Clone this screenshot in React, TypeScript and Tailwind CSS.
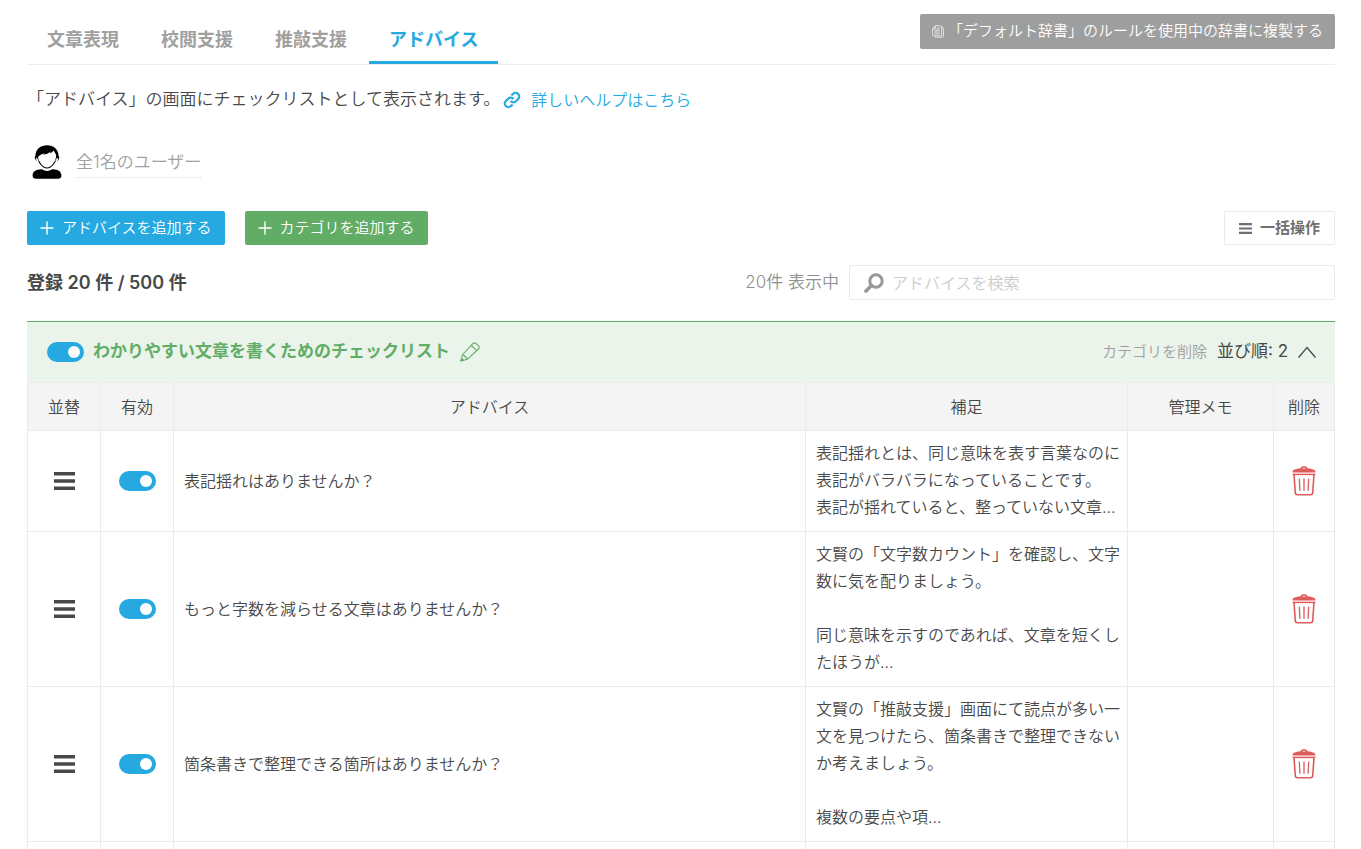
import { useState } from "react";

const tabs = ["文章表現", "校閲支援", "推敲支援", "アドバイス"];

type Advice = {
  id: number;
  title: string;
  note: string;
};

const adviceList: Advice[] = [
  {
    id: 1,
    title: "表記揺れはありませんか？",
    note: "表記揺れとは、同じ意味を表す言葉なのに表記がバラバラになっていることです。\n表記が揺れていると、整っていない文章...",
  },
  {
    id: 2,
    title: "もっと字数を減らせる文章はありませんか？",
    note: "文賢の「文字数カウント」を確認し、文字数に気を配りましょう。\n\n同じ意味を示すのであれば、文章を短くしたほうが...",
  },
  {
    id: 3,
    title: "箇条書きで整理できる箇所はありませんか？",
    note: "文賢の「推敲支援」画面にて読点が多い一文を見つけたら、箇条書きで整理できないか考えましょう。\n\n複数の要点や項...",
  },
];

function Toggle({ label }: { label: string }) {
  const [on, setOn] = useState(true);
  return (
    <input
      type="checkbox"
      aria-label={label}
      checked={on}
      onChange={e => setOn(e.target.checked)}
      className="flex h-5 w-[37px] shrink-0 cursor-pointer appearance-none items-center rounded-full bg-gray-300 px-1 before:h-3 before:w-3 before:rounded-full before:bg-white checked:justify-end checked:bg-[#25a9e0]"
    />
  );
}

function BarsIcon({ className }: { className: string }) {
  return (
    <svg viewBox="0 0 21 20" fill="currentColor" className={className} aria-hidden="true">
      <path d="M0 1h21v3.6H0zM0 8.2h21v3.6H0zM0 15.4h21V19H0z" />
    </svg>
  );
}

function PlusIcon() {
  return (
    <svg viewBox="0 0 14 14" stroke="currentColor" strokeWidth="1.4" className="h-3.5 w-3.5" aria-hidden="true">
      <path d="M7 .5v13M.5 7h13" />
    </svg>
  );
}

function CopyIcon() {
  return (
    <svg viewBox="0 0 12 13" fill="none" stroke="currentColor" strokeWidth="0.7" className="h-[13px] w-3" aria-hidden="true">
      <path d="M3.4.8h5.2a1 1 0 0 1 1 1v8a1 1 0 0 1-1 1h-7a1 1 0 0 1-1-1V3.6z" />
      <path d="M3.4.8v2.8H.6M2.4 5.2h5.2M2.4 7h5.2M2.4 8.8h5.2M4.8 3.3h2.8M9.8 2.4h.6a1 1 0 0 1 1 1v7.8a1 1 0 0 1-1 1H4a1 1 0 0 1-1-1" />
    </svg>
  );
}

function LinkIcon() {
  return (
    <svg viewBox="0 0 24 24" fill="none" stroke="currentColor" strokeWidth="3" className="h-[18px] w-[18px]" aria-hidden="true">
      <path d="M10 13.2a4.8 4.8 0 0 0 7.2.5l3-3a4.8 4.8 0 0 0-6.8-6.8l-2.2 2.2" />
      <path d="M14 10.8a4.8 4.8 0 0 0-7.2-.5l-3 3a4.8 4.8 0 0 0 6.8 6.8l2.2-2.2" />
    </svg>
  );
}

function UserIcon() {
  return (
    <svg viewBox="0 0 30 34" className="h-[34px] w-[30px]" aria-hidden="true">
      <path
        d="M5 10.5C5.5 16.500 10.500 23 15 23S24.500 16.500 25 10.500"
        fill="#fff"
        stroke="#000"
        strokeWidth="1.200"
      />
      <path
        d="M3.200 14.200C2.300 12.500 3 11.600 3.400 10.800 3.800 4 8.500.3 15 .3S26.200 4 26.600 10.800c.4.800 1.100 1.700.2 3.400-.6 1-1.300 1.400-1.900 1.600l-.4-4.300C24 9 23 7.500 21.500 5.400c-.8 1.400-2 2.200-3.600 2.900l.7-1.800c-2 2.200-4.500 2.600-7.200 3.300l1.200-1.500c-2.800.8-5.500 2-6.900 4.200l-.4 3.300c-.8-.3-1.500-.7-2.100-1.600z"
      />
      <path d="M4 13.500c1 .2 1.500 1.700 2 2.800M26 13.500c-1 .2-1.500 1.700-2 2.800" fill="none" stroke="#fff" strokeWidth="1.400" />
      <path d="M9 24.200c2 .2 3.600 1.700 6 1.700s4-1.500 6-1.700c5 .2 8.400 2.300 8.400 6.300 0 2.200-1.400 3.300-3.400 3.300H4c-2 0-3.400-1.100-3.400-3.300 0-4 3.400-6.100 8.400-6.300z" />
    </svg>
  );
}

function SearchIcon() {
  return (
    <svg viewBox="0 0 20 20" fill="none" stroke="currentColor" className="h-5 w-5" aria-hidden="true">
      <circle cx="12" cy="8" r="6.200" strokeWidth="3" />
      <path d="M7.500 12.500L2 18" strokeWidth="3.600" strokeLinecap="round" />
    </svg>
  );
}

function PencilIcon() {
  return (
    <svg viewBox="0 0 20 20" fill="none" stroke="currentColor" strokeWidth="1.100" strokeLinejoin="round" className="h-5 w-5" aria-hidden="true">
      <path d="M1 19l1.300-6L12.800 1.700a2.400 2.400 0 0 1 3.300-.1l2.300 2.100a2.400 2.400 0 0 1 .1 3.300L7.200 17.300z" />
      <path d="M2.500 13c1.300-.3 1.900.4 2 1.700 1.400-.2 2.400.9 2.500 2.600M11.300 3.500l5.200 4.900" />
      <path d="M1 19l.7-2.700 2 2z" fill="currentColor" />
    </svg>
  );
}

function TrashIcon() {
  return (
    <svg viewBox="0 0 24 30" fill="none" stroke="currentColor" className="h-[30px] w-6" aria-hidden="true">
      <path d="M.6 6.400V5.600C.6 4.200 3.500 2.700 8.600 2.200 8.800.8 9.800.2 12 .2s3.200.6 3.400 2c5.100.5 8 2 8 3.400v.8z" fill="currentColor" stroke="none" />
      <path d="M10.600 2.200h2.800" stroke="#fff" strokeWidth="0.800" />
      <path d="M.6 8.400h22.800" strokeWidth="1.500" />
      <path d="M2 8.500l1.300 18.300c.1 1.300.8 1.900 2 1.900h13.400c1.200 0 1.900-.6 2-1.900L22 8.500" strokeWidth="1.600" />
      <path d="M7.300 12.500l.6 12.300M12 12.500v12.300M16.700 12.500l-.6 12.300" strokeWidth="1.300" />
    </svg>
  );
}

export default function App() {
  const [activeTab, setActiveTab] = useState("アドバイス");
  const [query, setQuery] = useState("");
  const [open, setOpen] = useState(true);

  const rows = adviceList.filter(a => a.title.includes(query));

  return (
    <main className="h-screen overflow-hidden bg-white pr-[26px] pl-[27px] font-['Inter','Noto_Sans_CJK_JP',sans-serif] text-[#484848]">
      {/* Tabs */}
      <header className="flex items-end justify-between border-b border-[#eeeeee] pt-3.5">
        <nav className="flex gap-0.5">
          {tabs.map(tab => (
            <button
              key={tab}
              onClick={() => setActiveTab(tab)}
              className={`h-[50px] border-b-3 px-5 pt-1 text-lg font-semibold ${
                tab === activeTab ? "border-[#25a9e0] text-[#25a9e0]" : "border-transparent text-[#a0a0a0]"
              }`}
            >
              {tab}
            </button>
          ))}
        </nav>
        <button className="mb-[15px] flex h-[35px] items-center gap-1 self-start rounded-xs bg-[#9e9e9e] px-3 text-[15px] font-[350] text-white">
          <CopyIcon />
          「デフォルト辞書」のルールを使用中の辞書に複製する
        </button>
      </header>

      <div className="mt-[21px] flex h-7 items-center gap-[3px]">
        <p className="text-[17px] font-[350]">「アドバイス」の画面にチェックリストとして表示されます。</p>
        <a href="#help" className="flex items-center gap-2.5 text-base font-[350] text-[#25a9e0]">
          <LinkIcon />
          詳しいヘルプはこちら
        </a>
      </div>

      <div className="mt-[31px] flex items-center gap-3.5 pl-[5px]">
        <UserIcon />
        <button className="border-b border-dotted border-[#dddddd] text-[17px] leading-[30px] font-[350] text-[#a0a0a0]">
          全1名のユーザー
        </button>
      </div>

      {/* Actions */}
      <div className="mt-8 flex items-center gap-5 text-[15px]">
        <button className="flex h-[34px] items-center gap-2 rounded-xs bg-[#25a9e0] px-[13px] font-[350] text-white">
          <PlusIcon />
          アドバイスを追加する
        </button>
        <button className="flex h-[34px] items-center gap-2 rounded-xs bg-[#62ad66] px-[13px] font-[350] text-white">
          <PlusIcon />
          カテゴリを追加する
        </button>
        <button className="ml-auto flex h-[34px] items-center gap-2 rounded-xs border border-[#eaeaea] px-3.5 font-semibold text-[#707070]">
          <BarsIcon className="h-[13px] w-[13px]" />
          一括操作
        </button>
      </div>

      <div className="mt-5 flex items-center">
        <h1 className="text-lg font-semibold">登録 20 件 / 500 件</h1>
        <span className="mr-2.5 ml-auto text-[17px] font-[350] text-[#909090]">20件 表示中</span>
        <label className="flex h-[35px] w-[486px] items-center gap-2 rounded-xs border border-[#eaeaea] pl-3.5 text-[#989898]">
          <SearchIcon />
          <input
            type="text"
            aria-label="アドバイスを検索"
            placeholder="アドバイスを検索"
            value={query}
            onChange={e => setQuery(e.target.value)}
            className="min-w-0 flex-1 text-base font-[350] text-[#484848] outline-none placeholder:text-[#cccccc]"
          />
        </label>
      </div>

      {/* Category */}
      <section className="mt-[21px]">
        <div className="flex h-[61px] items-center border-t border-[#62ad66] bg-[#eaf4ea] pr-[19px] pl-5">
          <Toggle label="カテゴリを有効にする" />
          <h2 className="ml-[9px] text-[17px] font-semibold text-[#62ad66]">わかりやすい文章を書くためのチェックリスト</h2>
          <button aria-label="カテゴリ名を編集" className="ml-2.5 text-[#62ad66]">
            <PencilIcon />
          </button>
          <button className="mr-2.5 ml-auto text-[15px] font-[350] text-[#a0a0a0]">カテゴリを削除</button>
          <span className="text-[17px]">並び順: 2</span>
          <button aria-label="開閉" onClick={() => setOpen(!open)} className="ml-2.5">
            <svg viewBox="0 0 18 12" fill="none" stroke="currentColor" strokeWidth="1.300" className="h-3 w-[18px]">
              <path d="M.5 11.500L9 1.500l8.500 10" />
            </svg>
          </button>
        </div>

        {open && (
          <table className="w-full table-fixed border-collapse text-base font-[350]">
            <colgroup>
              <col className="w-[73px]" />
              <col className="w-[73px]" />
              <col />
              <col className="w-[322px]" />
              <col className="w-[146px]" />
              <col className="w-[61px]" />
            </colgroup>
            <thead>
              <tr className="h-12 bg-[#f4f4f4]">
                <th className="border border-[#ebebeb] font-[350]">並替</th>
                <th className="border border-[#ebebeb] font-[350]">有効</th>
                <th className="border border-[#ebebeb] font-[350]">アドバイス</th>
                <th className="border border-[#ebebeb] font-[350]">補足</th>
                <th className="border border-[#ebebeb] font-[350]">管理メモ</th>
                <th className="border border-[#ebebeb] font-[350]">削除</th>
              </tr>
            </thead>
            <tbody>
              {rows.map(advice => (
                <tr key={advice.id}>
                  <td className="border border-[#ebebeb]">
                    <button aria-label="並び替え" className="mx-auto block cursor-move">
                      <BarsIcon className="h-5 w-[21px]" />
                    </button>
                  </td>
                  <td className="border border-[#ebebeb]">
                    <div className="flex justify-center">
                      <Toggle label={advice.title} />
                    </div>
                  </td>
                  <td className="border border-[#ebebeb] px-2.5 leading-[27px]">{advice.title}</td>
                  <td className="border border-[#ebebeb] pt-[9px] pr-1 pb-2.5 pl-2.5 leading-[27px] whitespace-pre-line">
                    {advice.note}
                  </td>
                  <td className="border border-[#ebebeb]"></td>
                  <td className="border border-[#ebebeb]">
                    <button aria-label="削除" className="mx-auto block text-[#de5b5b]">
                      <TrashIcon />
                    </button>
                  </td>
                </tr>
              ))}
              <tr className="h-24">
                <td className="border border-[#ebebeb]"></td>
                <td className="border border-[#ebebeb]"></td>
                <td className="border border-[#ebebeb]"></td>
                <td className="border border-[#ebebeb]"></td>
                <td className="border border-[#ebebeb]"></td>
                <td className="border border-[#ebebeb]"></td>
              </tr>
            </tbody>
          </table>
        )}
      </section>
    </main>
  );
}
